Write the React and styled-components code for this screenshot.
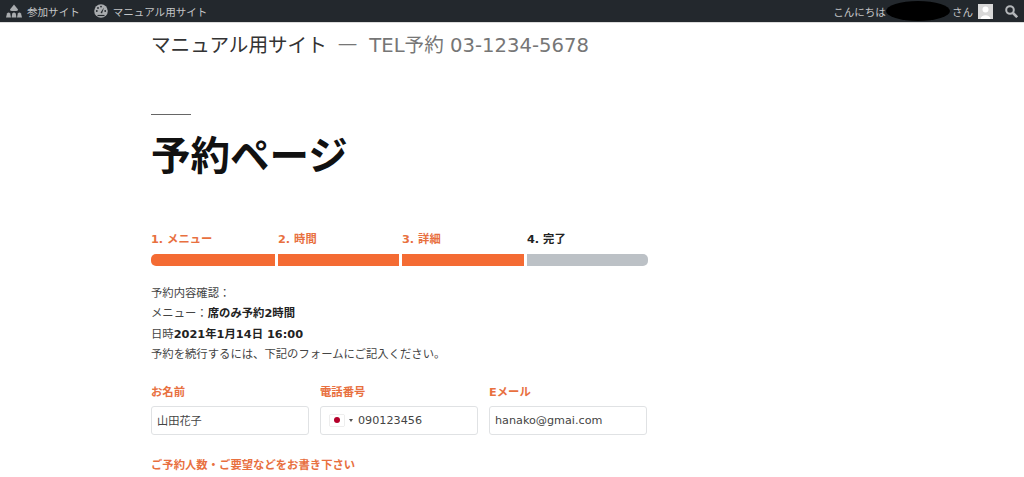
import React from 'react';
import styled, { createGlobalStyle } from 'styled-components';

const GlobalStyle = createGlobalStyle`
  html, body {
    margin: 0;
    padding: 0;
    background: #fff;
    overflow: hidden;
  }
  body {
    font-family: "DejaVu Sans", "Noto Sans CJK JP", sans-serif;
  }
`;

const AdminBar = styled.div`
  height: 22px;
  background: #23282d;
  display: flex;
  align-items: center;
  justify-content: space-between;
  padding: 0 6px 0 6px;
  color: #c3c5c7;
  font-size: 10.55px;
  border-bottom: 1px solid #dcdcdc;
  box-sizing: content-box;
`;

const BarGroup = styled.div`
  display: flex;
  align-items: center;
  gap: ${p => p.$gap || 0}px;
`;

const BarItem = styled.div`
  display: flex;
  align-items: center;
  gap: 5px;
  white-space: nowrap;
`;

const Redacted = styled.div`
  width: 64px;
  height: 20px;
  margin: 0 2px 0 0;
  background: #000;
  border-radius: 50%;
`;

const Avatar = styled.div`
  width: 15px;
  height: 15px;
  margin: 0 12px 0 5px;
  background: #d8d8d8;
`;

const Page = styled.main`
  width: 496px;
  margin-left: 151px;
`;

const SiteTitle = styled.div`
  display: flex;
  align-items: center;
  height: 44px;
  font-size: 19.6px;
  color: #333;
  white-space: nowrap;
  margin-top: -2px;
`;

const Tagline = styled.span`
  color: #767676;
`;

const Dash = styled.span`
  color: #767676;
  margin: 0 12px 0 11px;
`;

const Rule = styled.div`
  width: 40px;
  height: 1px;
  background: #666;
  margin-top: 49px;
`;

const Heading = styled.h1`
  margin: 12px 0 0;
  font-size: 39.5px;
  line-height: 59px;
  font-weight: 700;
  color: #111;
`;

const Steps = styled.div`
  display: grid;
  grid-template-columns: 124px 121px 122px 121px;
  gap: 3px;
  margin-top: 46px;
`;

const Step = styled.div`
  display: flex;
  flex-direction: column;
  gap: 6px;
`;

const StepLabel = styled.div`
  font-size: 11.3px;
  line-height: 16px;
  font-weight: 700;
  color: ${p => (p.$done ? '#e8703f' : '#222')};
  white-space: nowrap;
`;

const StepBar = styled.div`
  height: 12px;
  background: ${p => (p.$done ? '#f46b33' : '#bcc1c6')};
  border-radius: ${p => (p.$first ? '5px 0 0 5px' : p.$last ? '0 5px 5px 0' : '0')};
`;

const Summary = styled.div`
  margin-top: 17px;
  font-size: 11.35px;
  line-height: 20.4px;
  color: #444;
  white-space: nowrap;
`;

const Strong = styled.strong`
  color: #222;
  font-weight: 700;
`;

const Fields = styled.div`
  display: grid;
  grid-template-columns: repeat(3, 158px);
  gap: 11px;
  margin-top: 19px;
`;

const FieldLabel = styled.div`
  font-size: 11.35px;
  line-height: 16px;
  font-weight: 700;
  color: #e8703f;
  white-space: nowrap;
`;

const Field = styled.div`
  display: flex;
  flex-direction: column;
  gap: 6px;
`;

const InputBox = styled.div`
  height: 27px;
  border: 1px solid #e0e2e4;
  border-radius: 3px;
  display: flex;
  align-items: center;
  padding: 0 5px;
  font-size: 11.2px;
  color: #444;
  white-space: nowrap;
`;

const FlagBox = styled.div`
  width: 14px;
  height: 11px;
  margin: 0 5px 0 4px;
  background: #fff;
  box-shadow: 0 0 1px #999;
  display: flex;
  align-items: center;
  justify-content: center;
`;

const FlagDot = styled.div`
  width: 6px;
  height: 6px;
  border-radius: 50%;
  background: #b5002a;
`;

const Caret = styled.div`
  width: 0;
  height: 0;
  border-left: 2px solid transparent;
  border-right: 2px solid transparent;
  border-top: 3px solid #555;
  margin-right: 5px;
`;

const NoteLabel = styled(FieldLabel)`
  margin-top: 22px;
`;

const NetworkIcon = () => (
  <svg width="16" height="14" viewBox="0 0 16 14" fill="#a9acaf">
    <path d="M8 0.5 L12 5.5 Q12 7 10 7 H6 Q4 7 4 5.5 Z" />
    <path d="M0 13.5 L1 9.5 Q2.6 7.5 4.2 9.5 L5 13.5 Z" />
    <path d="M5.6 13.5 L6.2 9.5 Q8 7.5 9.8 9.5 L10.4 13.5 Z" />
    <path d="M11 13.5 L11.8 9.5 Q13.4 7.5 15 9.5 L16 13.5 Z" />
  </svg>
);

const GaugeIcon = () => (
  <svg width="14" height="14" viewBox="0 0 14 14">
    <circle cx="7" cy="7" r="6.8" fill="#a9acaf" />
    <path d="M6.5 8.5 L10 3.5 L8 9.5 Z" fill="#23282d" />
    <circle cx="2.8" cy="7" r="0.9" fill="#23282d" />
    <circle cx="4" cy="4" r="0.9" fill="#23282d" />
    <circle cx="7" cy="2.6" r="0.9" fill="#23282d" />
    <circle cx="11.2" cy="7" r="0.9" fill="#23282d" />
    <path d="M3.5 11.5 H10.5" stroke="#23282d" strokeWidth="1.2" />
  </svg>
);

const SearchIcon = () => (
  <svg width="13" height="13" viewBox="0 0 13 13" fill="none" stroke="#b4b7ba" strokeWidth="2">
    <circle cx="5" cy="5" r="3.8" />
    <path d="M8 8 L12.2 12.2" strokeWidth="2.6" />
  </svg>
);

const AvatarFigure = () => (
  <svg width="15" height="15" viewBox="0 0 15 15">
    <circle cx="7.5" cy="5.5" r="3" fill="#fff" />
    <path d="M2.5 15 C3 10 12 10 12.5 15 Z" fill="#fff" />
  </svg>
);

const steps = [
  { label: '1. メニュー', done: true },
  { label: '2. 時間', done: true },
  { label: '3. 詳細', done: true },
  { label: '4. 完了', done: false },
];

const App = () => (
  <>
    <GlobalStyle />
    <AdminBar>
      <BarGroup $gap={14}>
        <BarItem><NetworkIcon />参加サイト</BarItem>
        <BarItem><GaugeIcon />マニュアル用サイト</BarItem>
      </BarGroup>
      <BarGroup>
        こんにちは
        <Redacted />
        さん
        <Avatar><AvatarFigure /></Avatar>
        <SearchIcon />
      </BarGroup>
    </AdminBar>
    <Page>
      <SiteTitle>
        マニュアル用サイト<Dash>—</Dash><Tagline>TEL予約 03-1234-5678</Tagline>
      </SiteTitle>
      <Rule />
      <Heading>予約ページ</Heading>
      <Steps>
        {steps.map((step, index) => (
          <Step key={step.label}>
            <StepLabel $done={step.done}>{step.label}</StepLabel>
            <StepBar $done={step.done} $first={index === 0} $last={index === steps.length - 1} />
          </Step>
        ))}
      </Steps>
      <Summary>
        <div>予約内容確認：</div>
        <div>メニュー：<Strong>席のみ予約2時間</Strong></div>
        <div>日時<Strong>2021年1月14日 16:00</Strong></div>
        <div>予約を続行するには、下記のフォームにご記入ください。</div>
      </Summary>
      <Fields>
        <Field>
          <FieldLabel>お名前</FieldLabel>
          <InputBox>山田花子</InputBox>
        </Field>
        <Field>
          <FieldLabel>電話番号</FieldLabel>
          <InputBox><FlagBox><FlagDot /></FlagBox><Caret />090123456</InputBox>
        </Field>
        <Field>
          <FieldLabel>Eメール</FieldLabel>
          <InputBox>hanako@gmai.com</InputBox>
        </Field>
      </Fields>
      <NoteLabel>ご予約人数・ご要望などをお書き下さい</NoteLabel>
    </Page>
  </>
);

export default App;
